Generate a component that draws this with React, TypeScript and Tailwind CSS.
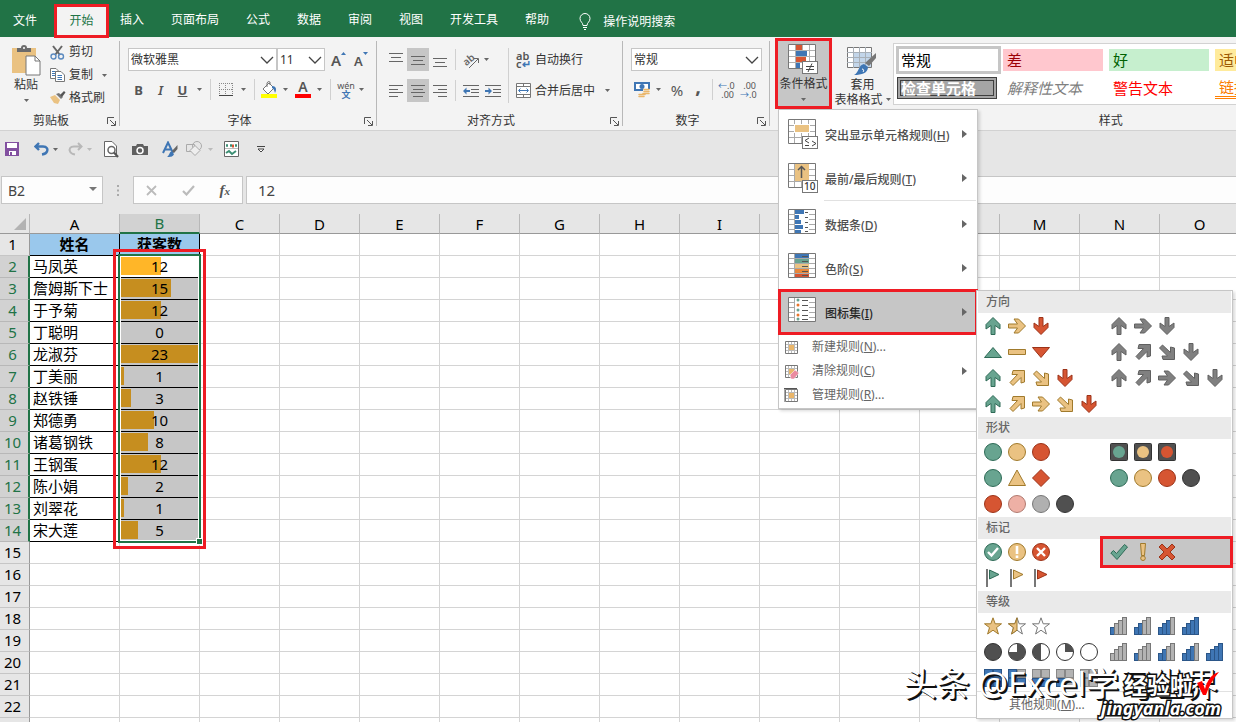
import type { ReactNode } from 'react';

const tabsAfterHome = ['插入', '页面布局', '公式', '数据', '审阅', '视图', '开发工具', '帮助'];
const columns = ['A', 'B', 'C', 'D', 'E', 'F', 'G', 'H', 'I', 'J', 'K', 'L', 'M', 'N', 'O'];
const rows = Array.from({ length: 23 }, (_, i) => i + 1);

const people = [
    { name: '马凤英', count: 12 },
    { name: '詹姆斯下士', count: 15 },
    { name: '于予菊', count: 12 },
    { name: '丁聪明', count: 0 },
    { name: '龙淑芬', count: 23 },
    { name: '丁美丽', count: 1 },
    { name: '赵铁锤', count: 3 },
    { name: '郑德勇', count: 10 },
    { name: '诸葛钢铁', count: 8 },
    { name: '王钢蛋', count: 12 },
    { name: '陈小娟', count: 2 },
    { name: '刘翠花', count: 1 },
    { name: '宋大莲', count: 5 },
];
const maxCount = 23;

const GREEN = '#68a490';
const YELLOW = '#eac282';
const RED = '#d65532';
const GRAY = '#808080';
const DARK = '#505050';
const BLUE = '#3f76b4';

const outlines: Record<string, string> = {
    [GREEN]: '#2f6b57',
    [YELLOW]: '#a07a2c',
    [RED]: '#9c3318',
    [GRAY]: '#606060',
    [DARK]: '#333333',
};

type SvgProps = { w: number; h: number; children: ReactNode; className?: string };

const Svg = ({ w, h, children, className }: SvgProps) => (
    <svg width={w} height={h} viewBox={`0 0 ${w} ${h}`} fill="none" className={className ?? 'shrink-0'} aria-hidden="true">
        {children}
    </svg>
);

const Caret = ({ light = false }: { light?: boolean }) => (
    <Svg w={5} h={3}>
        <path d="M0 0H5L2.5 3Z" fill={light ? '#bbb' : '#666'} />
    </Svg>
);

const Chevron = () => (
    <Svg w={14} h={8} className="pointer-events-none absolute right-[3px] top-[8px]">
        <path d="M1 1L7 7L13 1" stroke="#444" strokeWidth="1.3" />
    </Svg>
);

const Launcher = () => (
    <button aria-label="更多设置" className="absolute right-1 bottom-1">
        <Svg w={9} h={9}>
            <path d="M.5 7V.5H7M3 3L8 8M8.5 4V8.5H4" stroke="#555" />
        </Svg>
    </button>
);

const Divider = ({ className = 'h-[21px]' }: { className?: string }) => <div className={`w-px bg-[#d0d0d0] ${className}`} />;

/* Ribbon icons */

const PasteIcon = () => (
    <Svg w={29} h={31}>
        <rect x="0" y="3" width="24" height="25" fill="#eac282" />
        <path d="M5 3H9A3 3 0 0 1 15 3H19V7H5Z" fill="#6b6b6b" />
        <circle cx="12" cy="3" r="1" fill="#fff" />
        <path d="M14 11H23L28 16V30H14Z" fill="#fff" stroke="#777" />
        <path d="M23 11V16H28" stroke="#777" />
    </Svg>
);

const CutIcon = () => (
    <Svg w={15} h={15}>
        <path d="M3 1L10 10M12 1L5 10" stroke="#666" strokeWidth="2" />
        <circle cx="3.5" cy="11.5" r="2.5" stroke="#5b8ac0" strokeWidth="1.4" />
        <circle cx="11" cy="11.5" r="2.5" stroke="#5b8ac0" strokeWidth="1.4" />
    </Svg>
);

const CopyIcon = () => (
    <Svg w={15} h={14}>
        <path d="M.5 .5H6L9 3.5V10.5H.5Z" fill="#fff" stroke="#777" />
        <path d="M2 3.5H6M2 5.5H6M2 7.5H6" stroke="#3f76b4" />
        <path d="M5.5 3.5H11L14.5 7V13.5H5.5Z" fill="#fff" stroke="#777" />
        <path d="M7.5 7.5H12M7.5 9.5H12M7.5 11.5H12" stroke="#3f76b4" />
    </Svg>
);

const BrushIcon = () => (
    <Svg w={16} h={14}>
        <path d="M0 6L5 4L10 9L8 13L4 12Z" fill="#eac282" />
        <path d="M6 3L9 2L13 6L11 8Z" fill="#777" />
        <path d="M10 4L14 0L15.5 1.5L12 6Z" fill="#555" />
    </Svg>
);

const HLines = ({ lines }: { lines: [number, number, number][] }) => (
    <Svg w={14} h={14}>
        {lines.map(([x1, x2, y]) => (
            <path key={y} d={`M${x1} ${y + 0.5}H${x2}`} stroke="#666" />
        ))}
    </Svg>
);

const IndentIcon = ({ flip = false }: { flip?: boolean }) => (
    <Svg w={17} h={14}>
        <path d="M0 1.5H16M8 5.5H16M8 8.5H16M0 12.5H16" stroke="#666" />
        <path d={flip ? 'M7 7L3.5 3.5V6H0V8H3.5V10.5Z' : 'M0 7L3.5 3.5V6H7V8H3.5V10.5Z'} fill="#3f76b4" />
    </Svg>
);

const MergeIcon = () => (
    <Svg w={15} h={15}>
        <path d="M.5 .5H14.5V14.5H.5ZM.5 3.5H14.5M.5 11.5H14.5M7.5 .5V3.5M7.5 11.5V14.5" fill="#fff" stroke="#777" />
        <path d="M3 7.5H12M4.5 5.5L2.5 7.5L4.5 9.5M10.5 5.5L12.5 7.5L10.5 9.5" stroke="#3f76b4" />
    </Svg>
);

const CurrencyIcon = () => (
    <Svg w={17} h={17}>
        <rect x="1" y="2" width="14" height="7" fill="#fff" stroke="#3f76b4" strokeWidth="2" />
        <circle cx="8" cy="5.5" r="2.5" fill="#3f76b4" />
        <path d="M9 8H16V15H9ZM4 12H11V16H4Z" fill="#f3f3f3" />
        <path d="M10 8.5H15M10 10.5H15M9 12.5H15M5 13.5H11M5 15.5H10" stroke="#eab66a" strokeWidth="1.5" strokeLinecap="round" />
    </Svg>
);

const CondFormatIcon = () => (
    <Svg w={31} h={31}>
        <path d="M.5 .5H27.5V24.5H.5Z" fill="#fff" stroke="#777" />
        <path d="M1 6.5H27M1 12.5H27M1 18.5H27M7.5 1V24M14.5 1V24M21.5 1V24" stroke="#b0b0b0" />
        <path d="M8 1H14V6H8ZM8 13H18V18H8Z" fill="#d65532" />
        <path d="M8 7H19V12H8ZM8 19H12V24H8Z" fill="#3f76b4" />
        <rect x="14.5" y="17.5" width="15" height="12" fill="#fff" stroke="#777" />
        <path d="M18 22.5H26M18 25.5H26M24 19.5L20 28" stroke="#444" />
    </Svg>
);

const TableFormatIcon = () => (
    <Svg w={31} h={30}>
        <path d="M.5 .5H24.5V20.5H.5Z" fill="#fff" stroke="#777" />
        <path d="M7 6H24V20H7Z" fill="#c3d6ea" />
        <path d="M0 5.5H25M0 10.5H25M0 15.5H25M6.5 0V21M12.5 0V21M18.5 0V21" stroke="#a8b0b8" />
        <path d="M29 6V11L22 19L18 16Z" fill="#777" />
        <path d="M17 17L21 20C21 26 15 28 7 28C12 26 11 18 17 17Z" fill="#3f76b4" />
        <path d="M15 22C17 22 17 24 16 25" stroke="#fff" />
    </Svg>
);

/* Conditional formatting menu icons */

const GridBase = ({ children, rowsH = 6 }: { children: ReactNode; rowsH?: number }) => (
    <Svg w={30} h={30}>
        <path d="M.5 .5H27.5V24.5H.5Z" fill="#fff" stroke="#777" />
        {[1, 2, 3, 4].filter((n) => n * rowsH < 24).map((n) => (
            <path key={n} d={`M1 ${n * rowsH + 0.5}H27`} stroke="#aaa" />
        ))}
        <path d="M6.5 1V24M13.5 1V24M20.5 1V24" stroke="#aaa" />
        {children}
    </Svg>
);

const HighlightIcon = () => (
    <GridBase>
        <rect x="6" y="5" width="16" height="9" fill="#fff" />
        <rect x="7" y="6" width="14" height="7" fill="#eac282" />
        <rect x="14.5" y="17.5" width="15" height="12" fill="#fff" stroke="#777" />
        <path d="M21 19L17 21.5L21 24M17 26.5H21M24 22L28 24.5L24 27" stroke="#444" />
    </GridBase>
);

const TopBottomIcon = () => (
    <GridBase>
        <rect x="7" y="1" width="14" height="17" fill="#eac282" />
        <path d="M13.5 15V4M10 7L13.5 3.5L17 7" stroke="#555" strokeWidth="1.5" />
        <rect x="14.5" y="17.5" width="15" height="12" fill="#fff" stroke="#777" />
        <text x="16" y="27" fontSize="10" fill="#333">10</text>
    </GridBase>
);

const DataBarIcon = () => (
    <GridBase rowsH={5}>
        <path d="M7 1H21V24H7Z" fill="#fff" />
        <path d="M7 1H16V5H7ZM7 6H11V10H7ZM7 11H13V15H7ZM7 16H15V20H7ZM7 21H13V24H7Z" fill="#3f76b4" />
        <path d="M17 3.5H20M17 8.5H20M17 13.5H20M17 18.5H20M17 22.5H20" stroke="#555" />
    </GridBase>
);

const ColorScaleIcon = () => (
    <GridBase rowsH={5}>
        {['#3f76b4', '#68a490', '#eac282', '#e8873a', '#d65532'].map((fill, i) => (
            <rect key={fill} x="7" y={1 + i * 5} width="14" height={i === 4 ? 3 : 4} fill={fill} />
        ))}
        <path d="M14 3.5H20M14 8.5H20M14 13.5H20M14 18.5H20M14 22.5H20" stroke="#555" />
    </GridBase>
);

const IconSetIcon = () => (
    <GridBase rowsH={5}>
        <path d="M7 1H21V24H7Z" fill="#fff" />
        {['#68a490', '#e8762c', '#68a490', '#e8762c', '#68a490'].map((fill, i) => (
            <circle key={i} cx="10" cy={3 + i * 5 - (i === 4 ? 1 : 0)} r="1.5" fill={fill} />
        ))}
        <path d="M14 3.5H20M14 8.5H20M14 13.5H20M14 18.5H20M14 22.5H20" stroke="#555" />
    </GridBase>
);

const SmallGridIcon = ({ kind }: { kind: 'new' | 'clear' | 'manage' }) => (
    <Svg w={15} h={15}>
        <path d="M1.5 1.5H13.5V13.5H1.5Z" fill="#fff" stroke="#777" />
        <path d="M2 4.5H13M2 10.5H13M4.5 2V13M7.5 2V13M10.5 2V13M2 7.5H13" stroke="#bbb" />
        <rect x="5" y="5" width="5" height="5" fill="#eab66a" />
        {kind === 'clear' && <path d="M6 11L11 6L15 9L10 15H7Z" fill="#ea8ba0" stroke="#fff" strokeWidth=".5" />}
        {kind === 'manage' && <path d="M0 14V.5H13" stroke="#555" />}
    </Svg>
);

/* Icon-set glyphs, all on an 18px box */

const Arrow = ({ color, dir }: { color: string; dir: 'up' | 'down' | 'right' | 'ne' | 'se' }) => {
    const straight = 'M9 .5L16 7.5V12L11 8.5V17.5H7V8.5L2 12V7.5Z';
    const diagonal = 'M5 1.5H16.5V13L13 14V8.5L5 16.5L2 13.5L9.5 5.5H4Z';
    const turn = { up: 0, right: 90, down: 180, ne: 0, se: 90 }[dir];
    return (
        <Svg w={18} h={18}>
            <path
                d={dir === 'ne' || dir === 'se' ? diagonal : straight}
                fill={color}
                stroke={outlines[color]}
                transform={`rotate(${turn} 9 9)`}
            />
        </Svg>
    );
};

const Dot = ({ color, stroke, children }: { color: string; stroke?: string; children?: ReactNode }) => (
    <Svg w={18} h={18}>
        <circle cx="9" cy="9" r="8.5" fill={color} stroke={stroke ?? outlines[color]} />
        {children}
    </Svg>
);

const Poly = ({ color, d }: { color: string; d: string }) => (
    <Svg w={18} h={18}>
        <path d={d} fill={color} stroke={outlines[color]} strokeLinejoin="round" />
    </Svg>
);

const TrafficLight = ({ color }: { color: string }) => (
    <Svg w={18} h={18}>
        <rect x=".5" y=".5" width="17" height="17" rx="1" fill="#505050" stroke="#333" />
        <circle cx="9" cy="9" r="6" fill={color} />
    </Svg>
);

const Flag = ({ color }: { color: string }) => (
    <Svg w={18} h={18}>
        <path d="M3 0V18" stroke="#777" strokeWidth="2" />
        <path d="M5.5 1L15 5.5L5.5 10Z" fill={color} stroke={outlines[color]} />
    </Svg>
);

const Star = ({ fill }: { fill: 'full' | 'half' | 'none' }) => {
    const d = 'M9 .8L11.2 6.8H17.5L12.5 10.6L14.4 17L9 13.2L3.6 17L5.5 10.6L.5 6.8H6.8Z';
    return (
        <Svg w={18} h={18}>
            <path d={d} fill={fill === 'full' ? '#eac282' : '#fff'} stroke={fill === 'full' ? '#a07a2c' : '#777'} />
            {fill === 'half' && <path d="M9 .8V13.2L3.6 17L5.5 10.6L.5 6.8H6.8Z" fill="#eac282" stroke="#a07a2c" />}
        </Svg>
    );
};

const Pie = ({ d }: { d?: string }) => (
    <Svg w={18} h={18}>
        <circle cx="9" cy="9" r="8.5" fill="#fff" stroke="#333" />
        {d && <path d={d} fill="#505050" />}
    </Svg>
);

const Signal = ({ level }: { level: number }) => (
    <Svg w={18} h={18}>
        {[7, 11, 14, 17].map((height, i) => (
            <rect
                key={height}
                x={0.5 + i * 4}
                y={17.5 - height}
                width="4"
                height={height}
                fill={i < level ? BLUE : '#b3b3b3'}
                stroke={i < level ? '#2b5688' : '#777'}
            />
        ))}
    </Svg>
);

const Quarters = ({ level }: { level: number }) => (
    <Svg w={18} h={18}>
        {[[0, 9], [9, 9], [0, 0], [9, 0]].map(([x, y], i) => (
            <rect key={i} x={x + 0.5} y={y + 0.5} width="8" height="8" fill={i < level ? BLUE : '#b3b3b3'} stroke={i < level ? '#2b5688' : '#888'} />
        ))}
    </Svg>
);

const CHECK = 'M.8 10L3.5 7.5L6.5 10.5L14.5 1.5L17.5 4L7 16.5Z';
const CROSS = 'M4 1L9 6L14 1L17 4L12 9L17 14L14 17L9 12L4 17L1 14L6 9L1 4Z';

type IconRow = { left: ReactNode; right?: ReactNode; active?: boolean };

const sections: { title: string; rows: IconRow[] }[] = [
    {
        title: '方向',
        rows: [
            {
                left: <><Arrow color={GREEN} dir="up" /><Arrow color={YELLOW} dir="right" /><Arrow color={RED} dir="down" /></>,
                right: <><Arrow color={GRAY} dir="up" /><Arrow color={GRAY} dir="right" /><Arrow color={GRAY} dir="down" /></>,
            },
            {
                left: <><Poly color={GREEN} d="M.5 14.5L9 4.5L17.5 14.5Z" /><Poly color={YELLOW} d="M.5 6.5H17.5V11.5H.5Z" /><Poly color={RED} d="M.5 4.5H17.5L9 14.5Z" /></>,
                right: <><Arrow color={GRAY} dir="up" /><Arrow color={GRAY} dir="ne" /><Arrow color={GRAY} dir="se" /><Arrow color={GRAY} dir="down" /></>,
            },
            {
                left: <><Arrow color={GREEN} dir="up" /><Arrow color={YELLOW} dir="ne" /><Arrow color={YELLOW} dir="se" /><Arrow color={RED} dir="down" /></>,
                right: <><Arrow color={GRAY} dir="up" /><Arrow color={GRAY} dir="ne" /><Arrow color={GRAY} dir="right" /><Arrow color={GRAY} dir="se" /><Arrow color={GRAY} dir="down" /></>,
            },
            {
                left: <><Arrow color={GREEN} dir="up" /><Arrow color={YELLOW} dir="ne" /><Arrow color={YELLOW} dir="right" /><Arrow color={YELLOW} dir="se" /><Arrow color={RED} dir="down" /></>,
            },
        ],
    },
    {
        title: '形状',
        rows: [
            {
                left: <><Dot color={GREEN} /><Dot color={YELLOW} /><Dot color={RED} /></>,
                right: <><TrafficLight color={GREEN} /><TrafficLight color={YELLOW} /><TrafficLight color={RED} /></>,
            },
            {
                left: <><Dot color={GREEN} /><Poly color={YELLOW} d="M.5 16.5L9 1L17.5 16.5Z" /><Poly color={RED} d="M9 .5L17.5 9L9 17.5L.5 9Z" /></>,
                right: <><Dot color={GREEN} /><Dot color={YELLOW} /><Dot color={RED} /><Dot color={DARK} /></>,
            },
            {
                left: <><Dot color={RED} /><Dot color="#eeb0a5" stroke="#b07a70" /><Dot color="#b0b0b0" stroke="#777" /><Dot color={DARK} /></>,
            },
        ],
    },
    {
        title: '标记',
        rows: [
            {
                left: (
                    <>
                        <Dot color={GREEN}><path d="M4 9L7.5 12.5L14 5" stroke="#fff" strokeWidth="2.4" /></Dot>
                        <Dot color={YELLOW}><path d="M9 3V11M9 12.5V15" stroke="#fff" strokeWidth="2.6" /></Dot>
                        <Dot color={RED}><path d="M5 5L13 13M13 5L5 13" stroke="#fff" strokeWidth="2.4" /></Dot>
                    </>
                ),
                right: (
                    <>
                        <Poly color={GREEN} d={CHECK} />
                        <Svg w={18} h={18}>
                            <path d="M6.5 .5H11.5L10.5 12.5H7.5Z" fill={YELLOW} stroke="#a07a2c" />
                            <circle cx="9" cy="15.2" r="2.3" fill={YELLOW} stroke="#a07a2c" />
                        </Svg>
                        <Poly color={RED} d={CROSS} />
                    </>
                ),
                active: true,
            },
            { left: <><Flag color={GREEN} /><Flag color={YELLOW} /><Flag color={RED} /></> },
        ],
    },
    {
        title: '等级',
        rows: [
            {
                left: <><Star fill="full" /><Star fill="half" /><Star fill="none" /></>,
                right: <><Signal level={1} /><Signal level={2} /><Signal level={3} /><Signal level={4} /></>,
            },
            {
                left: (
                    <>
                        <Dot color={DARK} />
                        <Pie d="M9 9V.5A8.5 8.5 0 1 1 .5 9Z" />
                        <Pie d="M9 .5A8.5 8.5 0 0 0 9 17.5Z" />
                        <Pie d="M9 9V.5A8.5 8.5 0 0 1 17.5 9Z" />
                        <Pie />
                    </>
                ),
                right: <><Signal level={0} /><Signal level={1} /><Signal level={2} /><Signal level={3} /><Signal level={4} /></>,
            },
            { left: <><Quarters level={4} /><Quarters level={3} /><Quarters level={2} /><Quarters level={1} /><Quarters level={0} /></> },
        ],
    },
];

const MenuArrow = () => (
    <Svg w={5} h={8} className="ml-auto shrink-0">
        <path d="M0 0L5 4L0 8Z" fill="#666" />
    </Svg>
);

const MenuText = ({ text, hotkey, dots = false }: { text: string; hotkey: string; dots?: boolean }) => (
    <span>{text}(<u>{hotkey}</u>){dots && '...'}</span>
);

const BigItem = ({ icon, text, hotkey }: { icon: ReactNode; text: string; hotkey: string }) => (
    <button className="flex h-11 w-full items-center pr-[10px] pl-[9px] font-medium text-[#505050]">
        {icon}
        <span className="ml-[7px] pt-[3px]"><MenuText text={text} hotkey={hotkey} /></span>
        <MenuArrow />
    </button>
);

const SmallItem = ({ kind, text, hotkey, dots, arrow }: { kind: 'new' | 'clear' | 'manage'; text: string; hotkey: string; dots?: boolean; arrow?: boolean }) => (
    <button className="flex h-6 w-full items-center gap-[13px] pr-[10px] pl-[5px] text-[#666]">
        <SmallGridIcon kind={kind} />
        <MenuText text={text} hotkey={hotkey} dots={dots} />
        {arrow && <MenuArrow />}
    </button>
);

const IconSetPanel = () => (
    <div className="absolute top-px left-full -ml-0.5 w-[257px] border border-[#c6c6c6] bg-white shadow-[2px_2px_3px_rgba(0,0,0,0.15)]">
        {sections.map((section) => (
            <div key={section.title}>
                <div className="mx-px flex h-[22px] items-center bg-[#eaeaea] pl-2 font-medium text-[#666]">{section.title}</div>
                {section.rows.map((row, i) => (
                    <div key={i} className="flex h-[26px] items-center">
                        <button aria-label={`${section.title} ${i + 1}`} className="flex w-[126px] gap-1.5 pl-[7px]">{row.left}</button>
                        {row.right && (
                            <button
                                aria-label={`${section.title} ${i + 1} 备选`}
                                className={
                                    row.active
                                        ? '-my-[3px] -ml-[3px] -mr-px flex h-8 flex-1 items-center gap-1.5 border-3 border-[#ee1c24] bg-[#c6c6c6] pl-[7px]'
                                        : 'flex gap-1.5 pl-[7px]'
                                }
                            >
                                {row.right}
                            </button>
                        )}
                    </div>
                ))}
            </div>
        ))}
        <div className="border-t border-[#e1e1e1] pl-[32px]">
            <button className="flex h-[26px] items-center text-[#666]"><MenuText text="其他规则" hotkey="M" dots /></button>
        </div>
    </div>
);

const ConditionalMenu = () => (
    <div className="absolute top-full left-0 z-20 w-[200px] border border-[#c6c6c6] bg-white pt-0.5 shadow-[2px_2px_3px_rgba(0,0,0,0.15)]">
        <BigItem icon={<HighlightIcon />} text="突出显示单元格规则" hotkey="H" />
        <BigItem icon={<TopBottomIcon />} text="最前/最后规则" hotkey="T" />
        <div className="mr-px ml-[45px] h-0.5 border-t border-[#e1e1e1]" />
        <BigItem icon={<DataBarIcon />} text="数据条" hotkey="D" />
        <BigItem icon={<ColorScaleIcon />} text="色阶" hotkey="S" />
        <div className="relative -mx-px -my-px">
            <button className="flex h-[46px] w-full items-center border-3 border-[#ee1c24] bg-[#c6c6c6] pr-[8px] pl-[7px] font-medium text-[#262626]">
                <IconSetIcon />
                <span className="ml-[7px] pt-[3px]"><MenuText text="图标集" hotkey="I" /></span>
                <MenuArrow />
            </button>
            <IconSetPanel />
        </div>
        <div className="py-px">
            <SmallItem kind="new" text="新建规则" hotkey="N" dots />
            <SmallItem kind="clear" text="清除规则" hotkey="C" arrow />
            <SmallItem kind="manage" text="管理规则" hotkey="R" dots />
        </div>
    </div>
);

const Group = ({ title, className, children }: { title: string; className: string; children: ReactNode }) => (
    <section className={`relative flex shrink-0 flex-col ${className}`}>
        <div className="h-[71px]">{children}</div>
        <div className="pt-1 pr-[18px] text-center leading-[18px]">{title}</div>
        <Launcher />
        <div className="absolute top-1 right-0 bottom-1 w-px bg-[#b8b8b8]" />
    </section>
);

const TabBar = () => (
    <nav className="flex h-[37px] items-start bg-[#217346] text-white">
        <button className="h-[37px] w-[54px] pt-1 pr-1">文件</button>
        <button className="relative z-10 mt-1 h-[34px] w-[55px] border-3 border-[#ee1c24] bg-[#f3f3f3] text-[#217346]">开始</button>
        <div className="ml-[11px] flex gap-[27px] pt-3">
            {tabsAfterHome.map((tab) => (
                <button key={tab}>{tab}</button>
            ))}
        </div>
        <button className="ml-[30px] flex items-center gap-[12px] pt-[13px]">
            <Svg w={12} h={17}>
                <path d="M4 12.5C4 9.5 1 9 1 5.5A5 5 0 0 1 11 5.5C11 9 8 9.5 8 12.5ZM4 14.5H8M5 16.5H7" stroke="#fff" />
            </Svg>
            操作说明搜索
        </button>
    </nav>
);

const selectClass = 'block h-[23px] w-full appearance-none border border-[#c6c6c6] bg-white pl-[2px] text-[12px] text-[#333]';

const ClipboardGroup = () => (
    <Group title="剪贴板" className="w-[120px]">
        <div className="flex pt-2">
            <button className="ml-[2px] flex w-[48px] shrink-0 flex-col items-center">
                <PasteIcon />
                <span className="mt-px">粘贴</span>
                <span className="mt-[6px]"><Caret /></span>
            </button>
            <div className="flex flex-col gap-[5px]">
                <button className="-mt-0.5 flex h-[18px] items-center gap-[4px]"><CutIcon />剪切</button>
                <div className="flex h-[18px] items-center gap-[9px] whitespace-nowrap">
                    <button className="flex items-center gap-[4px]"><CopyIcon />复制</button>
                    <Caret />
                </div>
                <button className="flex h-[18px] items-center gap-[3px] whitespace-nowrap"><BrushIcon />格式刷</button>
            </div>
        </div>
    </Group>
);

const FontGroup = () => (
    <Group title="字体" className="w-[257px]">
        <div className="flex h-[34px] pt-[11px] pl-[8px]">
            <div className="relative w-[149px]">
                <select aria-label="字体" className={selectClass}><option>微软雅黑</option></select>
                <Chevron />
            </div>
            <div className="relative w-[48px]">
                <select aria-label="字号" className={selectClass}><option>11</option></select>
                <Chevron />
            </div>
            <button aria-label="增大字号" className="ml-[6px] flex w-[14px] items-start text-[15px] leading-[24px] font-semibold text-[#555]">
                A<Svg w={5} h={3} className="mt-[4px] shrink-0"><path d="M0 3L2.5 0L5 3Z" fill="#3f76b4" /></Svg>
            </button>
            <button aria-label="减小字号" className="ml-[9px] flex w-[14px] items-start text-[13px] leading-[26px] font-semibold text-[#555]">
                A<Svg w={5} h={3} className="mt-[4px] shrink-0"><path d="M0 0H5L2.5 3Z" fill="#3f76b4" /></Svg>
            </button>
        </div>
        <div className="mt-[7px] flex h-[23px] items-center pl-[13px] text-[13px] text-[#555]">
            <button className="w-[11px] font-bold">B</button>
            <button className="ml-[11px] w-[11px] font-semibold italic">I</button>
            <button className="ml-[11px] mr-[9px] w-[11px] font-bold underline">U</button>
            <Caret />
            <Divider className="ml-[8px] mr-[8px] h-[21px]" />
            <button aria-label="边框" className="mr-[8px]">
                <Svg w={14} h={14}>
                    <path d="M0 .5H14M0 6.5H14M.5 0V12M6.5 0V12M13.5 0V12" stroke="#888" strokeDasharray="1 1" />
                    <path d="M0 12.5H14" stroke="#444" />
                </Svg>
            </button>
            <Caret />
            <Divider className="ml-[8px] mr-[6px] h-[21px]" />
            <button aria-label="填充颜色" className="mr-[6px]">
                <Svg w={16} h={17}>
                    <path d="M2 8L8 2L13 7L7 13Z" fill="#fff" stroke="#777" />
                    <path d="M6 6V2A2 2 0 0 1 9 1V4" stroke="#777" />
                    <path d="M11 5C15 5 16 8 14 12C13 9 13 8 11 7Z" fill="#3f76b4" />
                    <path d="M0 13H16V17H0Z" fill="#ff0" />
                </Svg>
            </button>
            <Caret />
            <button aria-label="字体颜色" className="mr-[6px] ml-[7px] flex h-[17px] w-4 items-center justify-center border-b-4 border-[#f00] pb-[2px] text-[14px] leading-[13px] font-semibold">A</button>
            <Caret />
            <Divider className="ml-[8px] mr-[6px] h-[21px]" />
            <button className="mr-[4px] flex w-[18px] flex-col items-center text-[9px] leading-[9px]">
                wén<span className="font-bold text-[#3f76b4]">文</span>
            </button>
            <Caret />
        </div>
    </Group>
);

const toggle = 'flex h-[23px] w-[22px] items-center justify-center';

const AlignmentGroup = () => (
    <Group title="对齐方式" className="w-[246px]">
        <div className="flex pt-[11px] pl-[8px]">
            <div className="flex flex-col gap-2">
                <div className="flex h-[23px] items-center">
                    <button aria-label="顶端对齐" className={toggle}><HLines lines={[[0, 14, 0], [2, 12, 4], [0, 14, 8]]} /></button>
                    <button aria-label="垂直居中" className={`${toggle} bg-[#c6c6c6]`}><HLines lines={[[0, 14, 3], [2, 12, 7], [0, 14, 11]]} /></button>
                    <button aria-label="底端对齐" className={toggle}><HLines lines={[[0, 14, 5], [2, 12, 9], [0, 14, 13]]} /></button>
                    <Divider className="mx-[4px] h-[21px]" />
                    <button aria-label="方向" className="mr-[4px] ml-[3px]">
                        <Svg w={17} h={18}>
                            <text x="0" y="12" fontSize="10" fontWeight="600" fill="#666" transform="rotate(-40 6 9)">ab</text>
                            <path d="M6 17L15 8M11 7.5H15.5V12" stroke="#666" />
                        </Svg>
                    </button>
                    <Caret />
                </div>
                <div className="flex h-[23px] items-center">
                    <button aria-label="左对齐" className={toggle}><HLines lines={[[0, 14, 1], [0, 9, 5], [0, 14, 8], [0, 9, 12]]} /></button>
                    <button aria-label="居中" className={`${toggle} bg-[#c6c6c6]`}><HLines lines={[[0, 14, 1], [2, 12, 5], [0, 14, 8], [2, 12, 12]]} /></button>
                    <button aria-label="右对齐" className={toggle}><HLines lines={[[0, 14, 1], [5, 14, 5], [0, 14, 8], [5, 14, 12]]} /></button>
                    <Divider className="mx-[4px] h-[21px]" />
                    <button aria-label="减少缩进" className="ml-[3px]"><IndentIcon /></button>
                    <button aria-label="增加缩进" className="ml-[5px]"><IndentIcon flip /></button>
                </div>
            </div>
            <Divider className="ml-[6px] h-[55px]" />
            <div className="flex flex-col gap-2 pl-[7px]">
                <button className="flex h-[23px] items-center gap-[4px]">
                    <span className="w-[15px] text-left text-[11px] leading-[8px] font-semibold text-[#555]">ab<br />c<span className="text-[#3f76b4]">↵</span></span>
                    自动换行
                </button>
                <div className="flex h-[23px] items-center gap-[10px]">
                    <button className="flex items-center gap-[4px]"><MergeIcon />合并后居中</button>
                    <Caret />
                </div>
            </div>
        </div>
    </Group>
);

const NumberGroup = () => (
    <Group title="数字" className="w-[147px]">
        <div className="flex h-[34px] pt-[11px] pl-[8px]">
            <div className="relative w-[131px]">
                <select aria-label="数字格式" className={selectClass}><option>常规</option></select>
                <Chevron />
            </div>
        </div>
        <div className="mt-[7px] flex h-[23px] items-center pl-[11px] text-[#555]">
            <button aria-label="会计数字格式" className="mr-[5px]"><CurrencyIcon /></button>
            <Caret />
            <button className="ml-[9px] w-[14px] text-[15px]">%</button>
            <button className="ml-[10px] w-[8px] pb-[8px] text-[20px] leading-[16px] font-bold">,</button>
            <Divider className="ml-[10px] mr-[5px] h-[21px]" />
            <button className="w-[16px] text-right text-[9px] leading-[9px] whitespace-nowrap"><span className="text-[#3f76b4]">←</span>.0<br />.00</button>
            <button className="ml-[6px] w-[16px] text-right text-[9px] leading-[9px] whitespace-nowrap">.00<br /><span className="text-[#3f76b4]">→</span>.0</button>
        </div>
    </Group>
);

const styleCell = 'block h-[22px] w-[100px] shrink-0 pl-[4px] text-left leading-[20px] whitespace-nowrap';

const StylesGroup = () => (
    <section className="flex min-w-0 flex-1">
        <div className="relative z-20 ml-[5px] h-[72px] w-[57px] shrink-0 pt-px">
            <button className="flex h-[71px] w-[57px] flex-col items-center border-3 border-[#ee1c24] bg-[#c6c6c6] pt-[3px]">
                <CondFormatIcon />
                <span className="mt-px whitespace-nowrap">条件格式</span>
                <span className="mt-[6px]"><Caret /></span>
            </button>
            <div className="pl-[3px]">
                <div className="relative"><ConditionalMenu /></div>
            </div>
        </div>
        <button className="flex w-[61px] shrink-0 flex-col items-center pt-[10px] leading-[15px]">
            <TableFormatIcon />
            套用
            <span className="flex items-center gap-[3px] whitespace-nowrap">表格格式<Caret /></span>
        </button>
        <div className="flex min-w-0 flex-1 flex-col">
            <div className="mt-[6px] flex h-[62px] flex-col gap-[3px] overflow-hidden border border-r-0 border-[#d2d2d2] bg-white pt-[2px] pl-[2px] text-[15px]">
                <div className="flex items-center gap-[6px]">
                    <button className="-mr-[4px] block h-[28px] w-[105px] shrink-0 border-3 border-[#c6c6c6] pl-[2px] text-left leading-[20px] text-black">常规</button>
                    <button className={`${styleCell} bg-[#ffc7ce] text-[#9c0006]`}>差</button>
                    <button className={`${styleCell} bg-[#c6efce] text-[#006100]`}>好</button>
                    <button className={`${styleCell} bg-[#ffeb9c] text-[#9c5700]`}>适中</button>
                </div>
                <div className="flex items-center gap-[6px] pl-px">
                    <button className="block h-[22px] w-[100px] shrink-0 border-4 border-double border-[#3f3f3f] bg-[#a5a5a5] text-left leading-[13px] font-bold text-white">检查单元格</button>
                    <button className={`${styleCell} text-[#7f7f7f] italic`}>解释性文本</button>
                    <button className={`${styleCell} text-[#f00]`}>警告文本</button>
                    <button className={`${styleCell} border-b-3 border-double border-[#ff8001] text-[#fa7d00]`}>链接单元格</button>
                </div>
            </div>
            <div className="pt-[7px] pl-[27%] text-center leading-[18px]">样式</div>
        </div>
    </section>
);

const QuickAccess = () => (
    <div className="flex h-9 items-center pl-[5px]">
        <button aria-label="保存"><Svg w={14} h={14}><path d="M0 0H14V14H0Z" fill="#8250a0" /><path d="M2 1H12V6H2ZM4 9H11V13H4Z" fill="#fff" /><path d="M5 10H7V13H5Z" fill="#8250a0" /></Svg></button>
        <button aria-label="撤销" className="mr-[4px] ml-[15px]"><Svg w={15} h={14}><path d="M5 1L1.5 4.5L5 8M2 4.5H9C13 4.5 14 7 13 9.5C12.5 11 11 12 8 12.5" stroke="#3f76b4" strokeWidth="2.4" /></Svg></button>
        <Caret />
        <button aria-label="恢复" className="mr-[4px] ml-[10px]"><Svg w={15} h={14}><path d="M10 1L13.5 4.5L10 8M13 4.5H6C2 4.5 1 7 2 9.5C2.5 11 4 12 7 12.5" stroke="#b8b8b8" strokeWidth="2" /></Svg></button>
        <Caret light />
        <button aria-label="打印预览" className="ml-[12px]"><Svg w={15} h={17}><path d="M.5 .5H8L12.5 5V15.5H.5Z" fill="#fff" stroke="#666" /><circle cx="7.5" cy="9" r="3.5" fill="#fff" stroke="#666" strokeWidth="1.5" /><path d="M10 11.5L14 16" stroke="#555" strokeWidth="2.2" /></Svg></button>
        <button aria-label="照相机" className="ml-[13px]"><Svg w={16} h={13}><path d="M0 3H4L5 1H11L12 3H16V12H0Z" fill="#606060" /><circle cx="8" cy="7.5" r="3" stroke="#fff" strokeWidth="1.5" /></Svg></button>
        <button aria-label="格式" className="ml-[14px]"><Svg w={16} h={17}><path d="M1 12L6 1.5L11 12M3 8.5H9" stroke="#3f76b4" strokeWidth="2" /><path d="M15.5 4L10 10L12 12L15.5 8Z" fill="#666" /><path d="M9.5 10.5L12 13C11 16 8 16 5 16C8 14 7 11 9.5 10.5Z" fill="#3f76b4" /></Svg></button>
        <button aria-label="形状" className="mr-[6px] ml-[8px]"><Svg w={16} h={16}><path d="M.5 3.5H8.5V10.5H.5Z" stroke="#aaa" /><circle cx="11" cy="5" r="4.5" stroke="#aaa" /><path d="M9 4.5L14 9.5L9 14.5L4 9.5Z" fill="#eee" stroke="#aaa" /></Svg></button>
        <Caret light />
        <button aria-label="图表" className="ml-[11px]"><Svg w={15} h={16}><path d="M.5 .5H14.5V15.5H.5Z" fill="#fff" stroke="#666" /><path d="M2 4.5H4M6 4.5H8M11 4.5H13" stroke="#3d8f74" strokeWidth="2.5" /><path d="M8 5H10" stroke="#d65532" strokeWidth="3" /><path d="M1 7.5H14" stroke="#bbb" /><path d="M2 12L5 10L8 13L12 10" stroke="#3d8f74" strokeWidth="2" /></Svg></button>
        <button aria-label="自定义快速访问工具栏" className="ml-[18px]"><Svg w={8} h={7}><path d="M0 .5H8" stroke="#444" /><path d="M1 3L4 6L7 3Z" fill="#fff" stroke="#444" /></Svg></button>
    </div>
);

const FormulaBar = () => (
    <div className="flex pt-[9px] pb-[10px] pl-px text-[15px] text-[#444]">
        <div className="relative">
            <input aria-label="名称框" defaultValue="B2" className="h-7 w-[102px] border border-[#c6c6c6] bg-[#fdfdfd] px-[6px] text-[14px]" />
            <Svg w={8} h={4} className="absolute top-[11px] right-[6px]"><path d="M0 0H8L4 4Z" fill="#777" /></Svg>
        </div>
        <div className="flex w-[30px] items-center justify-center">
            <Svg w={2} h={11}><path d="M0 0H2V2H0ZM0 4.5H2V6.5H0ZM0 9H2V11H0Z" fill="#aaa" /></Svg>
        </div>
        <div className="mr-[3px] flex h-7 w-[110px] items-center justify-between border border-[#c6c6c6] bg-[#fdfdfd] pr-[12px] pl-[12px]">
            <button aria-label="取消"><Svg w={11} h={11}><path d="M1 1L10 10M10 1L1 10" stroke="#bbb" strokeWidth="1.8" /></Svg></button>
            <button aria-label="输入"><Svg w={13} h={11}><path d="M1 6L4.5 9.5L12 1" stroke="#bbb" strokeWidth="2.2" /></Svg></button>
            <button aria-label="插入函数" className="font-['Liberation_Serif'] leading-4 font-bold italic text-[#555]">f<span className="text-[11px]">x</span></button>
        </div>
        <input aria-label="编辑栏" defaultValue="12" className="h-7 min-w-0 flex-1 border border-r-0 border-[#c6c6c6] bg-[#fdfdfd] px-[11px]" />
    </div>
);

const Sheet = () => (
    <div className="relative min-h-0 flex-1 overflow-hidden bg-white">
        <table className="w-[1240px] table-fixed border-separate border-spacing-0 text-[15px] text-black">
            <colgroup>
                <col className="w-[30px]" />
                <col className="w-[90px]" />
                {columns.slice(1).map((c) => <col key={c} className="w-20" />)}
            </colgroup>
            <thead>
                <tr className="h-5 bg-[#e6e6e6] leading-[18px]">
                    <th className="border-r border-b border-[#b8b8b8] border-b-[#999] p-0">
                        <Svg w={12} h={12} className="ml-[14px]"><path d="M12 0V12H0Z" fill="#b3b3b3" /></Svg>
                    </th>
                    {columns.map((c) => (
                        <th
                            key={c}
                            className={
                                c === 'B'
                                    ? 'h-5 border-r border-b-2 border-[#b8b8b8] border-b-[#217346] bg-[#d2d2d2] p-0 font-normal text-[#217346]'
                                    : 'h-5 border-r border-b border-[#b8b8b8] border-b-[#999] p-0 font-normal'
                            }
                        >
                            {c}
                        </th>
                    ))}
                </tr>
            </thead>
            <tbody>
                {rows.map((n) => {
                    const person = people[n - 2];
                    const filled = n === 1 || !!person;
                    return (
                        <tr key={n} className="h-[22px] leading-[21px]">
                            <th
                                className={
                                    person
                                        ? 'border-r-2 border-b border-r-[#217346] border-b-[#b8b8b8] bg-[#d2d2d2] p-0 pr-[3px] font-normal text-[#217346]'
                                        : 'border-r border-b border-r-[#999] border-b-[#c6c6c6] bg-[#e6e6e6] p-0 pr-[4px] font-normal'
                                }
                            >
                                {n}
                            </th>
                            {columns.map((c) => {
                                if (filled && c === 'A') {
                                    return person ? (
                                        <td key={c} className="border-r border-b border-black p-0 pl-[3px] whitespace-nowrap">{person.name}</td>
                                    ) : (
                                        <td key={c} className="border-r border-b border-black bg-[#9ac8ec] p-0 text-center font-bold">姓名</td>
                                    );
                                }
                                if (filled && c === 'B') {
                                    return person ? (
                                        <td key={c} className={n === 2 ? 'border-r border-b border-black bg-white p-0' : 'border-r border-b border-black bg-[#c6c6c6] p-0'}>
                                            <div className="relative h-[21px] text-center">
                                                <div
                                                    className={n === 2 ? 'absolute top-px left-px h-[18px] bg-[#ffb628]' : 'absolute top-px left-px h-[18px] bg-[#c68e1f]'}
                                                    style={{ width: Math.round((person.count / maxCount) * 77) }}
                                                />
                                                <span className="relative">{person.count}</span>
                                            </div>
                                        </td>
                                    ) : (
                                        <td key={c} className="border-r border-b border-black bg-[#9ac8ec] p-0 text-center font-bold">获客数</td>
                                    );
                                }
                                return <td key={c} className="border-r border-b border-[#d4d4d4] p-0" />;
                            })}
                        </tr>
                    );
                })}
            </tbody>
        </table>

        {/* Selected range with its fill handle, and the callout round it */}
        <div className="pointer-events-none absolute top-[40px] left-[118px] h-[289px] w-[83px] border-2 border-[#217346] shadow-[inset_0_0_0_1px_#fff]">
            <div className="absolute -right-[4px] -bottom-[4px] h-[7px] w-[7px] border border-white bg-[#217346]" />
        </div>
        <div className="pointer-events-none absolute top-[35px] left-[113px] h-[300px] w-[93px] border-3 border-[#ee1c24]" />
    </div>
);

const Watermark = () => (
    <div className="pointer-events-none absolute right-[18px] bottom-0 z-30 whitespace-nowrap text-white">
        <div className="pb-[16px] text-[33px] leading-[44px] [text-shadow:2px_2px_0_#111,1px_1px_0_#111]">头条 @Excel学习世界</div>
        <div className="absolute -right-[3px] bottom-[4px] flex flex-col items-end">
            <div className="flex items-center text-[23px] leading-[26px] font-bold [paint-order:stroke_fill] [-webkit-text-stroke:3px_#111]">
                经验啦
                <Svg w={28} h={26}><path d="M4 11L9 9L12 17C14 9 18 2 26 0C20 7 16 14 13 23H10Z" fill="#f00" /></Svg>
            </div>
            <div className="text-[18px] leading-[20px] font-bold italic [paint-order:stroke_fill] [-webkit-text-stroke:3px_#111]">jingyanla.com</div>
        </div>
    </div>
);

export default function App() {
    return (
        <div className="relative flex h-screen flex-col overflow-hidden bg-[#e6e6e6] font-['Noto_Sans','Noto_Sans_CJK_SC',sans-serif] text-[12px] leading-[16px] text-[#333]">
            <TabBar />
            <div className="flex h-[94px] border-b border-[#d2d2d2] bg-[#f3f3f3]">
                <ClipboardGroup />
                <FontGroup />
                <AlignmentGroup />
                <NumberGroup />
                <StylesGroup />
            </div>
            <QuickAccess />
            <FormulaBar />
            <Sheet />
            <Watermark />
        </div>
    );
}
